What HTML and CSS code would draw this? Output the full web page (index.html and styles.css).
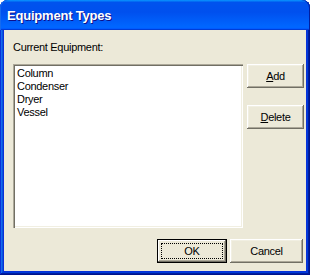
FILE: index.html
```html
<!DOCTYPE html>
<html>
<head>
<meta charset="utf-8">
<title>Equipment Types</title>
<link rel="stylesheet" href="styles.css">
</head>
<body>
<div class="window">
    <div class="title-bar">
        <span class="title">Equipment Types</span>
    </div>
    <div class="body">
        <div class="label">Current Equipment:</div>
        <div class="main">
            <div class="listbox">
                <div class="item">Column</div>
                <div class="item">Condenser</div>
                <div class="item">Dryer</div>
                <div class="item">Vessel</div>
            </div>
            <div class="side">
                <button class="button"><u>A</u>dd</button>
                <button class="button"><u>D</u>elete</button>
            </div>
        </div>
        <div class="footer">
            <button class="button default"><span class="focus">OK</span></button>
            <button class="button cancel">Cancel</button>
        </div>
    </div>
</div>
</body>
</html>
```

FILE: styles.css
```css
html, body {
    margin: 0;
    padding: 0;
}

body {
    width: 310px;
    height: 275px;
    font-family: "Liberation Sans", Arial, sans-serif;
    font-size: 11px;
    letter-spacing: -0.3px;
    color: #000;
    background: #fff;
}

* {
    box-sizing: border-box;
}

.window {
    width: 310px;
    height: 275px;
    display: flex;
    flex-direction: column;
    background: #0831d9;
    border-radius: 8px 8px 0 0;
    padding: 0 4px 4px 4px;
    box-shadow: inset -1px -1px #00138c, inset 1px 1px #0831d9, inset -2px -2px #001ea0, inset 2px 2px #166aee, inset -3px -3px #003bda, inset 3px 3px #0855dd;
}

.title-bar {
    height: 30px;
    margin: 0 -4px;
    padding: 0 7px;
    display: flex;
    align-items: center;
    border-radius: 8px 8px 0 0;
    background: linear-gradient(180deg, #0997ff, #0053ee 8%, #0050ee 40%, #06f 88%, #06f 93%, #005bff 95%, #003dd7 96%, #003dd7);
    box-shadow: inset 1px 0 #166aee, inset -1px 0 #001ea0;
}

.title {
    font-weight: bold;
    font-size: 13px;
    letter-spacing: -0.2px;
    color: #fff;
    text-shadow: 1px 1px #0f1089;
    padding-top: 1px;
}

.body {
    flex: 1;
    background: #ece9d8;
    padding: 11px 0 0 9px;
}

.label {
    height: 13px;
    line-height: 13px;
    margin-bottom: 10px;
}

.main {
    display: flex;
    align-items: flex-start;
}

.listbox {
    width: 230px;
    height: 164px;
    background: #fff;
    padding: 3px 4px;
    box-shadow: inset 1px 1px #aca899, inset 2px 2px #716f64, inset -1px -1px #fff, inset -2px -2px #f1efe2;
}

.item {
    height: 13px;
    line-height: 13px;
}

.side {
    display: flex;
    flex-direction: column;
    gap: 17px;
    margin-left: 4px;
}

.side .button {
    width: 57px;
}

.button {
    height: 24px;
    padding: 0;
    border: none;
    font-family: inherit;
    font-size: 11px;
    letter-spacing: -0.3px;
    color: #000;
    background: #ece9d8;
    box-shadow: inset -1px -1px #716f64, inset 1px 1px #fff, inset -2px -2px #aca899, inset 2px 2px #f1efe2;
}

.footer {
    display: flex;
    justify-content: flex-end;
    gap: 3px;
    margin-top: 11px;
    padding-right: 3px;
}

.footer .default {
    width: 70px;
}

.footer .cancel {
    width: 73px;
}

.default {
    box-shadow: inset 0 0 0 1px #000, inset -2px -2px #716f64, inset 2px 2px #fff, inset -3px -3px #aca899;
}

.focus {
    display: block;
    margin: 4px;
    height: 16px;
    line-height: 14px;
    border: 1px dotted #000;
}
```
